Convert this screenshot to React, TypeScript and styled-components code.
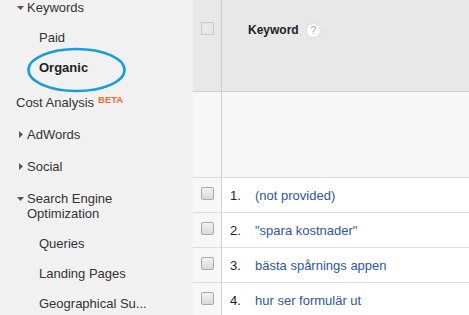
import React from "react";
import styled, { createGlobalStyle } from "styled-components";

const GlobalStyle = createGlobalStyle`
  html, body { margin: 0; padding: 0; background: #f1f1f1; }
  body { font-family: "Liberation Sans", Arial, sans-serif; overflow: hidden; }
  #root { height: 315px; }
`;

const Page = styled.div`
  display: flex;
  width: 469px;
  height: 315px;
  overflow: hidden;
`;

const Sidebar = styled.aside`
  position: relative;
  width: 193px;
  flex: 0 0 193px;
  background: #f1f1f1;
  overflow: hidden;
`;

const NavList = styled.div`
  display: flex;
  flex-direction: column;
  margin-top: -12px;
`;

const Heading = styled.div`
  display: flex;
  align-items: flex-start;
  padding: 12px 0 5px 16px;
  font-size: 13px;
  line-height: 15px;
  color: #333;
`;

const Caret = styled.span`
  display: inline-flex;
  width: 11px;
  height: 15px;
  flex: 0 0 11px;
  align-items: center;
`;

const Label = styled.span`
  max-width: 140px;
`;

const Beta = styled.sup`
  font-size: 9.5px;
  font-weight: bold;
  color: #ef6c34;
  margin-left: 4px;
  vertical-align: 4px;
  line-height: 0;
`;

const SubList = styled.div`
  display: flex;
  flex-direction: column;
  padding-top: 3px;
`;

const SubItem = styled.div<{ $active?: boolean }>`
  height: 30px;
  line-height: 30px;
  padding-left: 39px;
  font-size: 13px;
  white-space: nowrap;
  color: ${(p) => (p.$active ? "#222" : "#333")};
  font-weight: ${(p) => (p.$active ? "bold" : "normal")};
`;

const Annotation = styled.svg`
  position: absolute;
  left: 26px;
  top: 47px;
`;

const Table = styled.div`
  flex: 1;
  display: grid;
  grid-template-columns: 29px 1fr;
  grid-auto-rows: auto;
  background: #fff;
`;

const CheckCell = styled.div<{ $kind: "head" | "blank" | "row" }>`
  box-sizing: border-box;
  border-right: 1px solid #cfcfcf;
  border-bottom: 1px solid ${(p) => (p.$kind === "head" ? "#d0d0d0" : "#dcdcdc")};
  background: ${(p) => (p.$kind === "head" ? "#e8e8e8" : "#f7f7f7")};
  height: ${(p) => (p.$kind === "head" ? 92 : p.$kind === "blank" ? 86 : 35)}px;
  display: flex;
  justify-content: center;
  align-items: ${(p) => (p.$kind === "head" ? "flex-start" : "center")};
  padding-top: ${(p) => (p.$kind === "head" ? 22 : 0)}px;
  padding-left: 1px;
`;

const DataCell = styled.div<{ $kind: "head" | "blank" | "row" }>`
  box-sizing: border-box;
  border-bottom: 1px solid ${(p) => (p.$kind === "head" ? "#d0d0d0" : "#dcdcdc")};
  background: ${(p) => (p.$kind === "head" ? "#e8e8e8" : p.$kind === "blank" ? "#f7f7f7" : "#fff")};
  height: ${(p) => (p.$kind === "head" ? 92 : p.$kind === "blank" ? 86 : 35)}px;
  display: flex;
  align-items: ${(p) => (p.$kind === "head" ? "flex-start" : "center")};
  padding-top: ${(p) => (p.$kind === "head" ? 22 : 0)}px;
`;

const HeadCheck = styled.span`
  box-sizing: border-box;
  width: 13px;
  height: 13px;
  border: 1px solid #c8c8c8;
  background: #e8e8e8;
`;

const RowCheck = styled.span`
  box-sizing: border-box;
  width: 13px;
  height: 13px;
  border: 1px solid #a9a9a9;
  border-radius: 2px;
  background: linear-gradient(#f2f2f2, #d9d9d9);
  margin-top: -3px;
  margin-left: -1px;
`;

const HeadTitle = styled.div`
  display: flex;
  align-items: center;
  padding-left: 26px;
  font-size: 12px;
  font-weight: bold;
  line-height: 16px;
  color: #222;
`;

const Help = styled.span`
  display: inline-flex;
  align-items: center;
  justify-content: center;
  box-sizing: border-box;
  width: 15px;
  height: 15px;
  margin-left: 7px;
  border-radius: 50%;
  background: #fff;
  border: 1px solid #dcdcdc;
  color: #a8a8a8;
  font-size: 11px;
  font-weight: normal;
`;

const Num = styled.span`
  width: 25px;
  padding-left: 8px;
  font-size: 13px;
  color: #222;
`;

const KeywordLink = styled.a`
  font-size: 13px;
  color: #2c56a6;
  text-decoration: none;
`;

const Down = () => (
  <svg width="8" height="5" viewBox="0 0 8 5" style={{ marginLeft: 1, marginTop: 1 }}>
    <polygon points="0,0 7,0 3.5,4" fill="#555" />
  </svg>
);

const Right = () => (
  <svg width="5" height="8" viewBox="0 0 5 8" style={{ marginLeft: 3, marginTop: 1 }}>
    <polygon points="0,0 4,3.5 0,7" fill="#555" />
  </svg>
);

const rows = ["(not provided)", "\"spara kostnader\"", "bästa spårnings appen", "hur ser formulär ut"];

export default function App() {
  return (
    <>
      <GlobalStyle />
      <Page>
        <Sidebar>
          <NavList>
            <Heading>
              <Caret><Down /></Caret>
              <Label>Keywords</Label>
            </Heading>
            <SubList>
              <SubItem>Paid</SubItem>
              <SubItem $active>Organic</SubItem>
            </SubList>
            <Heading>
              <Label>
                Cost Analysis<Beta>BETA</Beta>
              </Label>
            </Heading>
            <Heading>
              <Caret><Right /></Caret>
              <Label>AdWords</Label>
            </Heading>
            <Heading>
              <Caret><Right /></Caret>
              <Label>Social</Label>
            </Heading>
            <Heading>
              <Caret><Down /></Caret>
              <Label>Search Engine Optimization</Label>
            </Heading>
            <SubList>
              <SubItem>Queries</SubItem>
              <SubItem>Landing Pages</SubItem>
              <SubItem>Geographical Su...</SubItem>
            </SubList>
          </NavList>
          <Annotation width="102" height="46" viewBox="0 0 102 46">
            <ellipse cx="50.5" cy="23" rx="48" ry="21" fill="none" stroke="#1a9bdb" strokeWidth="2.6" />
          </Annotation>
        </Sidebar>
        <Table>
          <CheckCell $kind="head"><HeadCheck /></CheckCell>
          <DataCell $kind="head">
            <HeadTitle>
              Keyword<Help>?</Help>
            </HeadTitle>
          </DataCell>
          <CheckCell $kind="blank" />
          <DataCell $kind="blank" />
          {rows.map((r, i) => (
            <React.Fragment key={i}>
              <CheckCell $kind="row"><RowCheck /></CheckCell>
              <DataCell $kind="row">
                <Num>{i + 1}.</Num>
                <KeywordLink href="#">{r}</KeywordLink>
              </DataCell>
            </React.Fragment>
          ))}
        </Table>
      </Page>
    </>
  );
}
